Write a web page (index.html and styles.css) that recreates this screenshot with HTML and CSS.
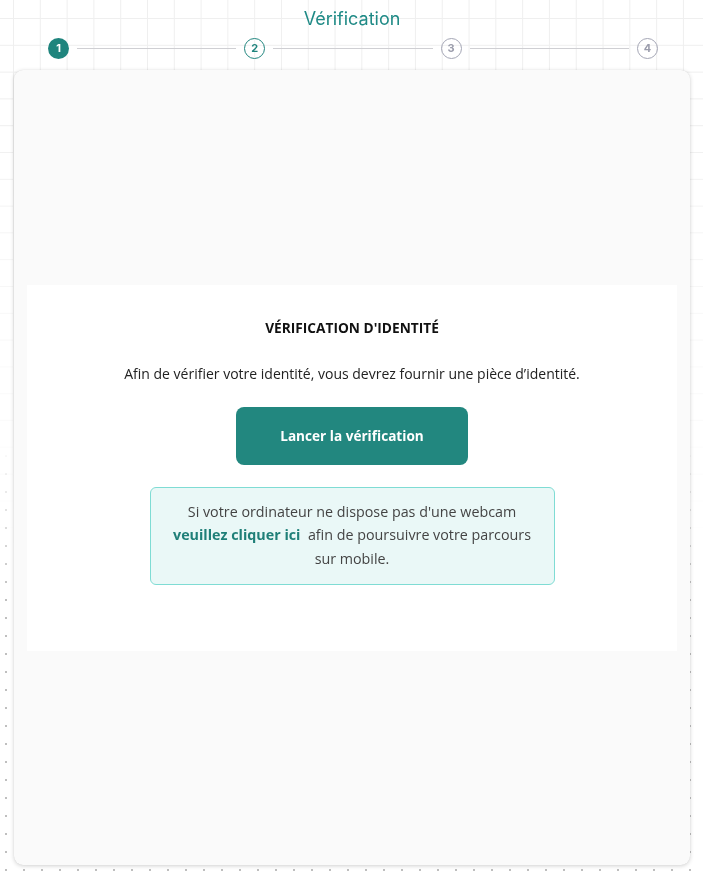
FILE: index.html
```html
<!DOCTYPE html>
<html lang="fr">
<head>
<meta charset="utf-8">
<title>Vérification</title>
<link rel="stylesheet" href="styles.css">
</head>
<body>
<div class="bg-grid"></div>
<div class="bg-dots"></div>
<main class="page">
  <header class="header">
    <h1 class="title">Vérification</h1>
    <ol class="steps">
      <li class="step step-done">1</li>
      <li class="step-line"></li>
      <li class="step step-current">2</li>
      <li class="step-line"></li>
      <li class="step step-todo">3</li>
      <li class="step-line"></li>
      <li class="step step-todo">4</li>
    </ol>
  </header>
  <section class="card">
    <div class="panel">
      <h2 class="panel-title">VÉRIFICATION D'IDENTITÉ</h2>
      <p class="panel-text">Afin de vérifier votre identité, vous devrez fournir une pièce d’identité.</p>
      <button class="btn-primary" type="button">Lancer la vérification</button>
      <div class="info">
        Si votre ordinateur ne dispose pas d'une webcam<br>
        <a class="info-link" href="#">veuillez cliquer ici</a>&nbsp; afin de poursuivre votre parcours<br>
        sur mobile.
      </div>
    </div>
  </section>
</main>
</body>
</html>
```
FILE: styles.css
```css
html, body {
  margin: 0;
  padding: 0;
}
body {
  background: #ffffff;
  font-family: "Open Sans", "Lato", sans-serif;
  color: #222;
  position: relative;
  min-height: 877px;
}
.bg-grid {
  position: fixed;
  inset: 0;
  z-index: 0;
  background-image:
    linear-gradient(to right, #efefef 1px, transparent 1px),
    linear-gradient(to bottom, #efefef 1px, transparent 1px);
  background-size: 26.8px 26.8px;
  background-position: 13px 18px;
  -webkit-mask-image: linear-gradient(to bottom, #000 0, #000 120px, rgba(0,0,0,0.35) 360px, transparent 560px);
  mask-image: linear-gradient(to bottom, #000 0, #000 120px, rgba(0,0,0,0.35) 360px, transparent 560px);
}
.bg-dots {
  position: fixed;
  inset: 0;
  z-index: 0;
  background-image: radial-gradient(circle, #bfbfbf 1px, transparent 1.4px);
  background-size: 18px 18px;
  background-position: -3px -3px;
  -webkit-mask-image: linear-gradient(to bottom, transparent 0, transparent 440px, #000 600px);
  mask-image: linear-gradient(to bottom, transparent 0, transparent 440px, #000 600px);
}
.page {
  position: relative;
  z-index: 1;
  padding: 0 13px 0 14px;
}
.header {
  padding-top: 8px;
}
.title {
  margin: 0;
  text-align: center;
  font-family: "Inter", "Liberation Sans", sans-serif;
  font-weight: 400;
  font-size: 18px;
  line-height: 22px;
  color: #1f8a86;
}
.steps {
  list-style: none;
  margin: 7px 0 0;
  padding: 0 32px 0 34px;
  display: flex;
  align-items: center;
  height: 22px;
}
.step {
  flex: 0 0 auto;
  box-sizing: border-box;
  width: 21px;
  height: 21px;
  border-radius: 50%;
  display: flex;
  align-items: center;
  justify-content: center;
  font-family: "Inter", "Liberation Sans", sans-serif;
  font-size: 11px;
  font-weight: 700;
  line-height: 1;
}
.step-done {
  background: #1f847d;
  color: #fff;
}
.step-current {
  border: 1.3px solid #1f847d;
  color: #1f847d;
}
.step-todo {
  border: 1.3px solid #a3a5b4;
  color: #9a9cab;
}
.step-line {
  flex: 1 1 auto;
  height: 1px;
  background: #cfcfd3;
  margin: 0 8px;
}
.card {
  margin-top: 11px;
  height: 795px;
  box-sizing: border-box;
  background: #fafafa;
  border-radius: 9px;
  box-shadow: 0 1px 4px rgba(0, 0, 0, 0.18), 0 0 1px rgba(0, 0, 0, 0.12);
  display: flex;
  align-items: center;
  padding: 0 13px;
}
.panel {
  flex: 1;
  height: 366px;
  box-sizing: border-box;
  background: #fff;
  padding-top: 34px;
  display: flex;
  flex-direction: column;
  align-items: center;
}
.panel-title {
  margin: 0;
  font-size: 13.7px;
  line-height: 18px;
  font-weight: 700;
  color: #111;
}
.panel-text {
  margin: 27px 0 0;
  font-size: 14px;
  line-height: 20px;
  color: #222;
}
.btn-primary {
  margin-top: 23px;
  width: 232px;
  height: 58px;
  border: 0;
  border-radius: 8px;
  background: #22877f;
  color: #fff;
  font-family: inherit;
  font-size: 13.6px;
  font-weight: 700;
  cursor: pointer;
}
.info {
  margin-top: 22px;
  width: 405px;
  box-sizing: border-box;
  padding: 12px 10px 14px;
  background: #eaf8f7;
  border: 1px solid #7fdcd4;
  border-radius: 6px;
  text-align: center;
  font-size: 14.3px;
  line-height: 23.5px;
  color: #444;
}
.info-link {
  color: #1f7f78;
  font-weight: 700;
  text-decoration: none;
}
```
